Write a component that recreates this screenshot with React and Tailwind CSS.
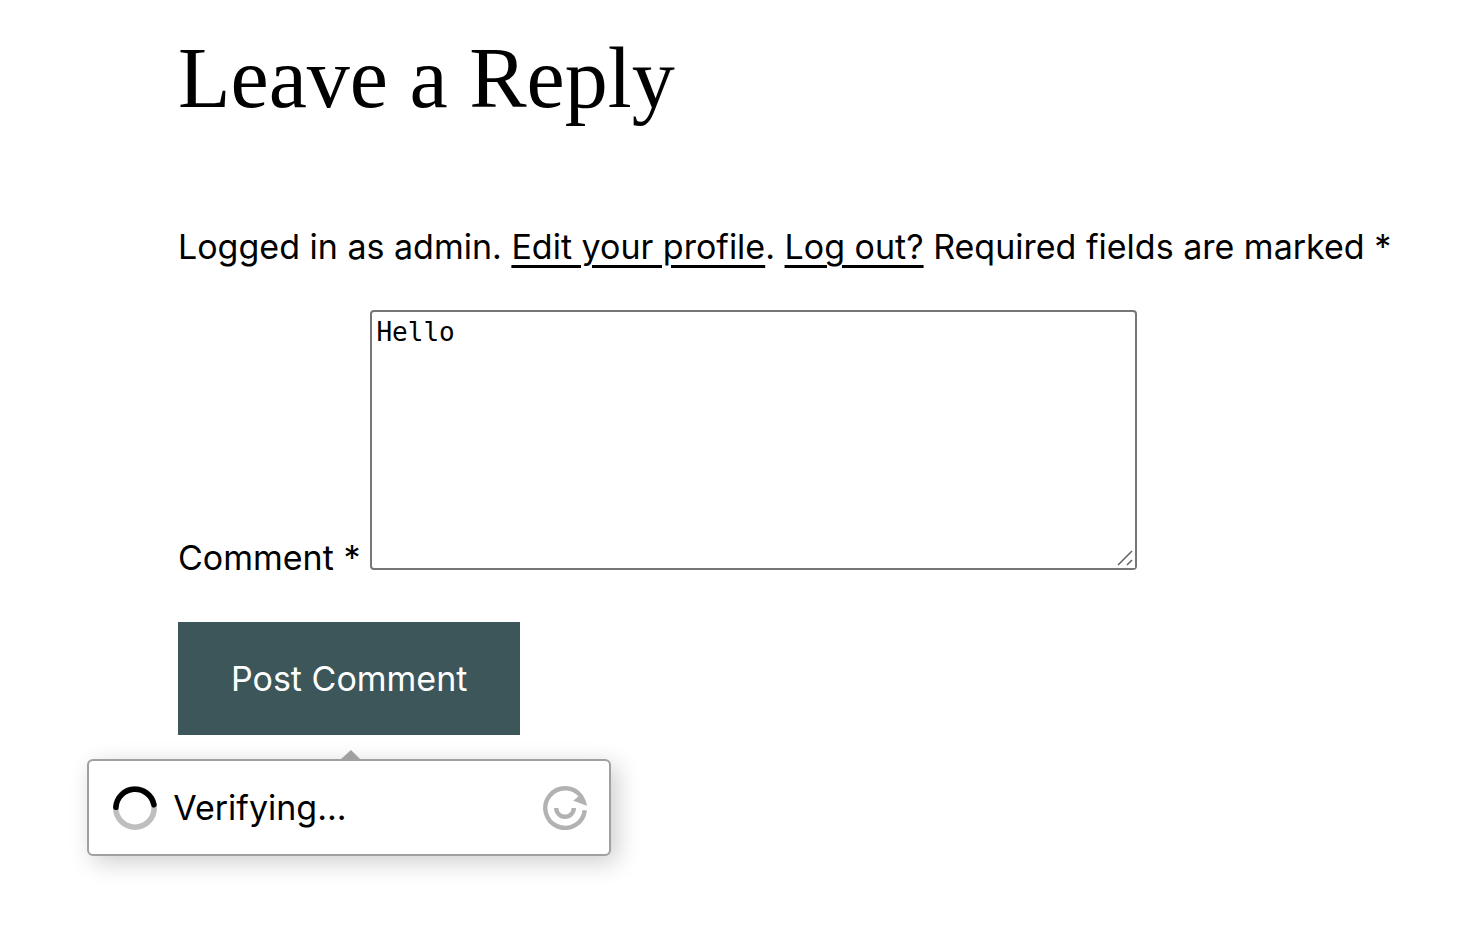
import React from "react";

function Spinner() {
  return (
    <svg className="h-11 w-11 shrink-0" viewBox="0 0 44 44" fill="none" aria-hidden="true">
      <circle cx="22" cy="22" r="19.2" stroke="#bfbfbf" strokeWidth="5.6" />
      <path d="M2.9 21.2A19.2 19.2 0 0 1 40.9 18.8" stroke="#000" strokeWidth="5.6" strokeLinecap="round" />
    </svg>
  );
}

function Logo() {
  return (
    <svg className="h-11 w-11" viewBox="0 0 44 44" fill="none" aria-hidden="true">
      <path d="M41.8 24.2A19.8 19.8 0 1 1 38.4 10.8" stroke="#b2b2b2" strokeWidth="4.4" />
      <path d="M30.2 14.8L38.6 7.8Q43 13 44 19.8Z" fill="#b2b2b2" />
      <path d="M13.2 22A8.8 8.8 0 0 0 30.8 22" stroke="#b2b2b2" strokeWidth="4.4" />
    </svg>
  );
}

function VerifyPopup() {
  return (
    <div
      role="status"
      className="absolute top-full left-1/2 mt-6 flex h-[97px] w-[524px] -translate-x-1/2 items-center rounded-md border-2 border-[#a0a0a0] bg-white pr-[22px] pl-6 shadow-[6px_6px_24px_rgba(0,0,0,0.2)]"
    >
      <svg className="absolute bottom-full left-1/2 h-3 w-6 -translate-x-1/2" viewBox="0 0 24 12" aria-hidden="true">
        <path d="M14 1L24 11V12H3V11Z" fill="#a0a0a0" />
      </svg>
      <Spinner />
      <span className="ml-4 flex-1">Verifying...</span>
      <a href="#altcha" aria-label="ALTCHA">
        <Logo />
      </a>
    </div>
  );
}

export default function App() {
  return (
    <main className="min-h-screen bg-white pt-6 pl-[178px] font-['Inter',sans-serif] text-[34px] leading-[58px] text-black">
      <h2 className="font-['Source_Serif_Pro','Liberation_Serif',serif] text-[86px] leading-[108px] font-light">
        Leave a Reply
      </h2>
      <form onSubmit={(e) => e.preventDefault()}>
        <p className="mt-[86px]">
          Logged in as admin.{" "}
          <a href="#profile" className="underline decoration-[3px] underline-offset-[6px]">Edit your profile</a>.{" "}
          <a href="#logout" className="underline decoration-[3px] underline-offset-[6px]">Log out?</a>{" "}
          Required fields are marked *
        </p>
        <div className="mt-[34px] flex items-end gap-[10px]">
          <label htmlFor="comment" className="leading-6">Comment *</label>
          <div className="relative">
            <textarea
              id="comment"
              defaultValue="Hello"
              className="block h-[260px] w-[767px] rounded-[4px] border-2 border-[#767676] bg-white p-1 font-['DejaVu_Sans_Mono',monospace] text-[26px] leading-[32px] outline-none [&::-webkit-resizer]:bg-white"
            />
            <svg
              className="pointer-events-none absolute right-1 bottom-1 h-4 w-4"
              viewBox="0 0 16 16"
              fill="none"
              stroke="#606060"
              strokeWidth="1.5"
              aria-hidden="true"
            >
              <path d="M1 15L15 1M10 15L15 10" />
            </svg>
          </div>
        </div>
        <div className="relative mt-[52px] w-fit">
          <button type="submit" className="h-[113px] bg-[#3c5659] px-[53px] text-white">
            Post Comment
          </button>
          <VerifyPopup />
        </div>
      </form>
    </main>
  );
}
